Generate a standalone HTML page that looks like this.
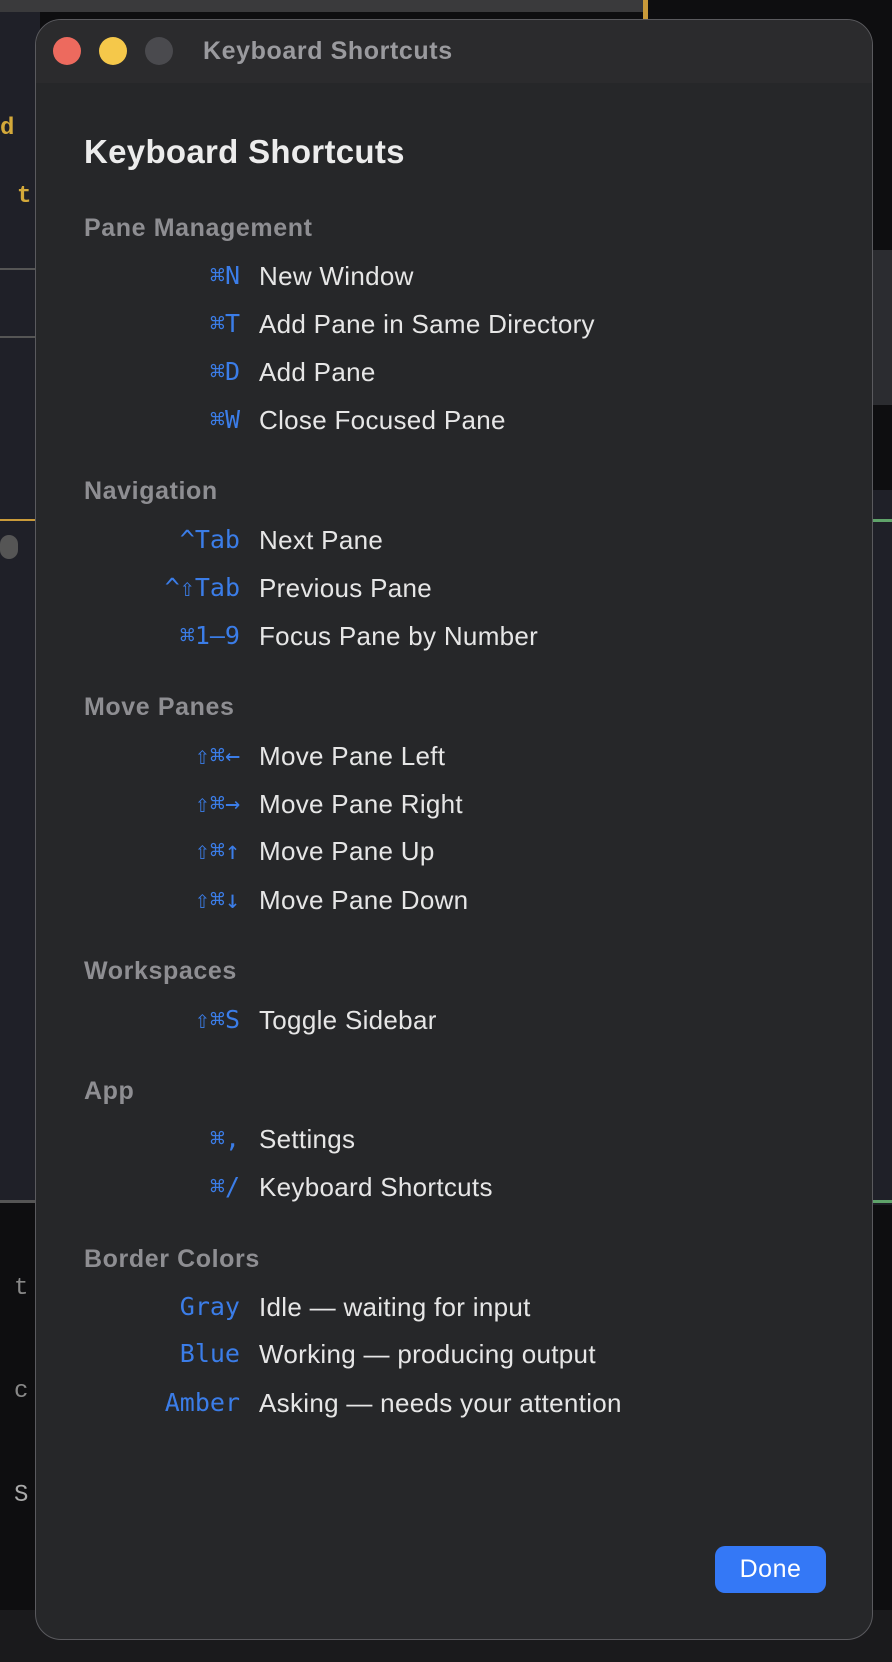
<!DOCTYPE html>
<html><head><meta charset="utf-8"><style>
*{margin:0;padding:0;box-sizing:border-box}
body{width:892px;height:1662px;background:#0e0e10;position:relative;overflow:hidden;font-family:"Liberation Sans",sans-serif}
.a{position:absolute}
.win{left:35px;top:19px;width:838px;height:1621px;background:#262729;border:1.5px solid #5a5a5e;border-radius:26px;overflow:hidden}
.tb{left:0;top:0;width:100%;height:63px;background:#2b2b2d}
.dot{width:28px;height:28px;border-radius:50%;top:17px}
.sec{left:48px;font-size:25px;letter-spacing:0.6px;font-weight:bold;color:#8e8e92;line-height:30px;margin-top:-15px}
.k{right:632px;font-family:"DejaVu Sans Mono","Liberation Mono",monospace;font-size:25px;color:#3b7de8;line-height:30px;margin-top:-15px;white-space:nowrap;text-align:right}
.t{left:223px;font-size:26px;letter-spacing:0.3px;color:#e6e6e6;line-height:30px;margin-top:-15px;white-space:nowrap}
</style></head><body>
<div class="a" style="left:0;top:0;width:645px;height:12px;background:#3a3a3c"></div>
<div class="a" style="left:643px;top:0;width:5px;height:30px;background:#c99a3a"></div>
<div class="a" style="left:0;top:12px;width:40px;height:1190px;background:#1f2028"></div>
<div class="a" style="left:0;top:268px;width:40px;height:2px;background:#555"></div>
<div class="a" style="left:0;top:336px;width:40px;height:2px;background:#555"></div>
<div class="a" style="left:0;top:519px;width:40px;height:2px;background:#c99a3a"></div>
<div class="a" style="left:0;top:1200px;width:40px;height:3px;background:#555"></div>
<div class="a" style="left:0;top:535px;width:18px;height:24px;border-radius:12px;background:#555"></div>
<div class="a" style="left:0;top:115px;color:#d4a93a;font:bold 24px 'Liberation Mono',monospace">d</div>
<div class="a" style="left:17px;top:183px;color:#d4a93a;font:bold 24px 'Liberation Mono',monospace">t</div>
<div class="a" style="left:14px;top:1275px;color:#888;font:24px 'Liberation Mono',monospace">t</div>
<div class="a" style="left:14px;top:1378px;color:#888;font:24px 'Liberation Mono',monospace">c</div>
<div class="a" style="left:14px;top:1482px;color:#aaa;font:24px 'Liberation Mono',monospace">S</div>
<div class="a" style="left:870px;top:250px;width:22px;height:155px;background:#2b2c30"></div>
<div class="a" style="left:870px;top:490px;width:22px;height:715px;background:#1f2028"></div>
<div class="a" style="left:870px;top:519px;width:22px;height:3px;background:#5fa36a"></div>
<div class="a" style="left:870px;top:1200px;width:22px;height:3px;background:#5fa36a"></div>
<div class="a" style="left:0;top:1610px;width:892px;height:52px;background:#1a1a1c"></div>

<div class="a win">
 <div class="a tb"></div>
 <div class="a dot" style="left:17px;background:#ed6a5e"></div>
 <div class="a dot" style="left:63px;background:#f5c84a"></div>
 <div class="a dot" style="left:109px;background:#4a4a4e"></div>
 <div class="a" style="left:167px;top:16px;font-size:25px;letter-spacing:0.6px;font-weight:bold;color:#9a9a9e;line-height:30px">Keyboard Shortcuts</div>
 <div class="a" style="left:48px;top:112px;font-size:33px;letter-spacing:0.3px;font-weight:bold;color:#ececec;line-height:40px">Keyboard Shortcuts</div>

 <div class="a sec" style="top:208px">Pane Management</div>
 <div class="a k" style="top:256px">⌘N</div><div class="a t" style="top:256px">New Window</div>
 <div class="a k" style="top:304px">⌘T</div><div class="a t" style="top:304px">Add Pane in Same Directory</div>
 <div class="a k" style="top:352px">⌘D</div><div class="a t" style="top:352px">Add Pane</div>
 <div class="a k" style="top:400px">⌘W</div><div class="a t" style="top:400px">Close Focused Pane</div>

 <div class="a sec" style="top:471px">Navigation</div>
 <div class="a k" style="top:520px">^Tab</div><div class="a t" style="top:520px">Next Pane</div>
 <div class="a k" style="top:568px">^⇧Tab</div><div class="a t" style="top:568px">Previous Pane</div>
 <div class="a k" style="top:616px">⌘1–9</div><div class="a t" style="top:616px">Focus Pane by Number</div>

 <div class="a sec" style="top:687px">Move Panes</div>
 <div class="a k" style="top:736px">⇧⌘←</div><div class="a t" style="top:736px">Move Pane Left</div>
 <div class="a k" style="top:784px">⇧⌘→</div><div class="a t" style="top:784px">Move Pane Right</div>
 <div class="a k" style="top:831px">⇧⌘↑</div><div class="a t" style="top:831px">Move Pane Up</div>
 <div class="a k" style="top:880px">⇧⌘↓</div><div class="a t" style="top:880px">Move Pane Down</div>

 <div class="a sec" style="top:951px">Workspaces</div>
 <div class="a k" style="top:1000px">⇧⌘S</div><div class="a t" style="top:1000px">Toggle Sidebar</div>

 <div class="a sec" style="top:1071px">App</div>
 <div class="a k" style="top:1119px">⌘,</div><div class="a t" style="top:1119px">Settings</div>
 <div class="a k" style="top:1167px">⌘/</div><div class="a t" style="top:1167px">Keyboard Shortcuts</div>

 <div class="a sec" style="top:1239px">Border Colors</div>
 <div class="a k" style="top:1287px">Gray</div><div class="a t" style="top:1287px">Idle — waiting for input</div>
 <div class="a k" style="top:1334px">Blue</div><div class="a t" style="top:1334px">Working — producing output</div>
 <div class="a k" style="top:1383px">Amber</div><div class="a t" style="top:1383px">Asking — needs your attention</div>

 <div class="a" style="left:679px;top:1526px;width:111px;height:47px;background:#3478f6;border-radius:10px;color:#fff;font-size:25px;letter-spacing:0.5px;text-align:center;line-height:47px">Done</div>
</div>
</body></html>
